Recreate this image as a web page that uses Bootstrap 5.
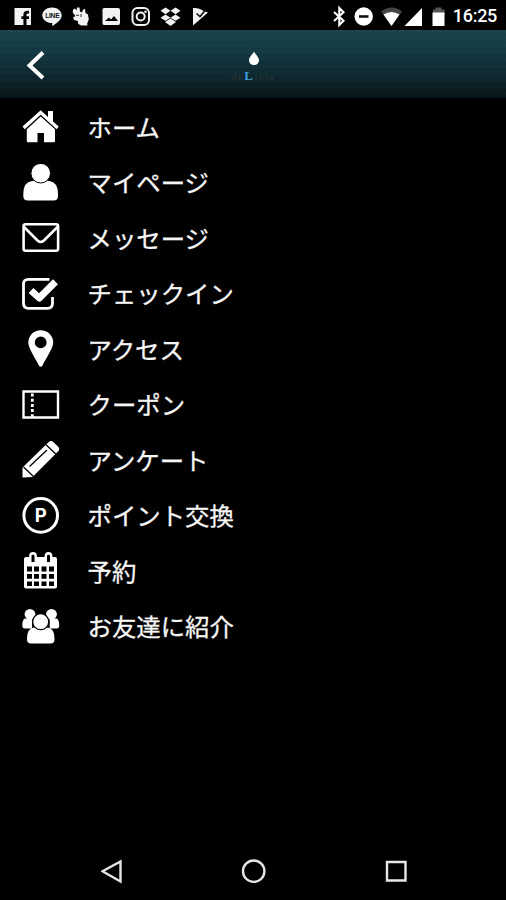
<!DOCTYPE html>
<html lang="ja">
<head>
<meta charset="utf-8">
<meta name="viewport" content="width=device-width, initial-scale=1">
<title>Menu</title>
<link href="https://cdn.jsdelivr.net/npm/bootstrap@5.3.0/dist/css/bootstrap.min.css" rel="stylesheet">
<style>
body{background:#000;color:#fff;font-family:"Noto Sans CJK JP",sans-serif;overflow:hidden}
svg{display:block;flex:none}
.screen{height:900px}
.statusbar{height:30px;padding:1px 9px 0 13px;font:500 18px/30px Roboto,sans-serif;letter-spacing:-.3px}
.app-head{height:69px;padding-left:26px;border-bottom:1px solid #020607;
background:repeating-linear-gradient(0deg,rgba(0,0,0,.09) 0 1px,transparent 1px 3px,rgba(70,130,140,.05) 3px 4px,transparent 4px 7px),linear-gradient(#1b444d,#163d46 25%,#102c34 60%,#061619)}
.brand-col{width:60px;margin-left:175.500px;padding-top:21px}
.brand-text{font:11px/11px "Liberation Serif",serif;color:#2a3436;letter-spacing:1.4px;white-space:nowrap}
.brand-text b{color:#3a9fdc;font-size:13px}
.menu-item{height:55.5px;padding-left:22px;color:#f6f6f6;text-decoration:none;font-size:24.4px;line-height:36px}
.menu-item svg{position:relative;top:.5px}
.menu-item span{margin-left:27.5px;white-space:nowrap;-webkit-text-stroke:.3px #f6f6f6}
.keys{height:58px;padding-left:101px}
</style>
</head>
<body>
<div class="screen d-flex flex-column">
<div class="statusbar d-flex align-items-center justify-content-between">
<svg width="200" height="28" viewBox="13 1 200 28" fill="#f2f2f2">
<path fill-rule="evenodd" d="M14.500 7h16.500v17h-4.500v-6h2.500v-2.800h-2.500v-1.500q0-1.500 2.500-1.300v-2.600q-5.600-.6-5.600 3.600v1.800h-2v2.800h2v6h-8.900z"/>
<path d="M52 6.500c5.400 0 9.700 3.400 9.700 7.800 0 4.700-5 8-9.300 10.700-.5-1-.1-2-.2-2.900-5.600 0-9.900-3.400-9.900-7.800s4.300-7.800 9.700-7.800z"/>
<text x="45.300" y="17" font-family="Liberation Sans" font-size="6.500" font-weight="700" fill="#111" textLength="14" lengthAdjust="spacingAndGlyphs">LINE</text>
<g><path d="M73 12q-1-4 2-4.500l1.500 2 .5-3h2.500l.5 4 2 1 1-3 2-.5.500 4 2.500 1.500.8 5-1.500 3.500v2.500h-6l-3-1.500-.5-3-3.500-1-1.300-2.500 2.500-1.500z"/><path d="M76 14l3 .5M81 13v3" stroke="#333"/></g>
<path fill-rule="evenodd" d="M104 7h14q2 0 2 2v13q0 2-2 2h-14q-1.500 0-1.500-2V9q0-2 1.500-2zM105 20h13l-4-5-3 3.500-2-2z"/>
<g fill="none" stroke="#f2f2f2" stroke-width="2"><rect x="132.500" y="7" width="16.500" height="17" rx="5"/><circle cx="140.700" cy="15.500" r="4"/></g><circle cx="145.500" cy="10.700" r="1.300"/>
<path d="M165.500 6.500l5 3.300-5 3.400-5-3.400zM175.500 6.500l5 3.300-5 3.400-5-3.400zM165.500 13.500l5 3.300-5 3-5-3zM175.500 13.500l5 3.300-5 3-5-3zM165 21l5.500-3.500 5.500 3.500-5.500 4z"/>
<path d="M193 7q5-.5 9 2l1.500 1 4.500 1.500L193 24.500z"/><path d="M196.500 12.500l3.500 3 5.500-6.500" fill="none" stroke="#111" stroke-width="1.600"/>
</svg>
<div class="d-flex align-items-center">
<svg width="120" height="28" viewBox="333 1 120 28" fill="#fff">
<path d="M334 11l9.500 8.700-4.200 4.300V7l4.200 4.200-9.500 8.700" fill="none" stroke="#fff" stroke-width="2.100"/>
<circle cx="363.700" cy="15.500" r="9.200"/><path d="M359 14.200h9.500v2.600H359z" fill="#111"/>
<path d="M381 10.500q11-8 21 0L391.500 25z" fill="#454545"/><path d="M383.500 13.500q8-5 16 0L391.500 25z"/>
<path d="M404.500 25L422 7v18z"/><path d="M433 8.500h2.500v-2h6v2h3V14H433z" fill="#555"/><path d="M432.500 11.500h12V25h-12z"/>
</svg><span>16:25</span></div>
</div>
<header class="app-head d-flex">
<svg width="22" height="68" viewBox="26 30 22 68"><path d="M43 52.500L29.500 65.500 43 78" fill="none" stroke="#fff" stroke-width="4"/></svg>
<div class="brand-col d-flex flex-column align-items-center">
<svg width="12" height="15" viewBox="0 0 12 15"><path d="M6 .5C7 3 11 6 11 9.300 11 12.300 9 14 6 14S1 12.300 1 9.300C1 6 5 3 6 .500z" fill="#fff"/></svg>
<div class="brand-text mt-1">de<b>L</b>icia</div>
</div>
</header>
<nav class="d-flex flex-column">
<a class="menu-item d-flex align-items-center" href="#"><svg width="38" height="38" fill="#fff"><path d="M18.700 2.300L26 9V3h5v10.500l5.700 5-2 2.700-16-14.500-16 14.500-2.200-2.700z"/><path d="M18.700 8.500L33 21.300V33q0 1.200-1.200 1.200H22V25h-6.500v9.200H6q-1.200 0-1.200-1.200V21.300z"/></svg><span>ホーム</span></a>
<a class="menu-item d-flex align-items-center" href="#"><svg width="38" height="38" fill="#fff"><path d="M10 17Q1.300 18 1.300 30v2q0 4.500 4.500 4.500h25.700q4.500 0 4.500-4.500v-2Q36 18 27.300 17z"/><circle cx="18.700" cy="9.200" r="9.800" stroke="#000" stroke-width="1"/></svg><span>マイページ</span></a>
<a class="menu-item d-flex align-items-center" href="#"><svg width="38" height="38" fill="none" stroke="#fff" stroke-width="2.600"><rect x="1.600" y="5.300" width="34.500" height="26.500" rx="2"/><path d="M2 8l13.500 13.500q3.200 3 6.400 0L35.500 8"/></svg><span>メッセージ</span></a>
<a class="menu-item d-flex align-items-center" href="#"><svg width="38" height="38" fill="none" stroke="#fff"><path d="M27.500 4.300H6.500q-5 0-5 5v19q0 5 5 5h19q5 0 5-5V22" stroke-width="2.800"/><path d="M9 15.500l8.300 7.500L33.500 6.800" stroke-width="7" stroke-linejoin="round"/></svg><span>チェックイン</span></a>
<a class="menu-item d-flex align-items-center" href="#"><svg width="38" height="38" fill="#fff"><path fill-rule="evenodd" d="M18.700.2c7 0 12.500 5.400 12.500 12.300 0 6-8.500 18-10.500 22.700q-2 3-4 0C14.700 30.500 6.300 18.500 6.300 12.500 6.300 5.600 11.700.2 18.700.2zm0 6.300a5.900 5.900 0 100 11.800 5.900 5.900 0 000-11.800z"/></svg><span>アクセス</span></a>
<a class="menu-item d-flex align-items-center" href="#"><svg width="38" height="38" fill="none" stroke="#fff"><path d="M1.500 5.500h34.500v26H1.500z" stroke-width="2.400"/><path d="M10.300 7.500V31" stroke-width="2.800" stroke-dasharray="3 2.200"/></svg><span>クーポン</span></a>
<a class="menu-item d-flex align-items-center" href="#"><svg width="38" height="38" fill="#fff"><path d="M.5 36.500V26.500L26.500 1.200q2.500-2.500 5 0l4.500 4.300q2.500 2.500 0 5L10.500 36z"/><path d="M1.500 26l10 9.500M24 3.800l9.800 9.200M7.500 25.500L25 9" stroke="#000" stroke-width="1.300"/></svg><span>アンケート</span></a>
<a class="menu-item d-flex align-items-center" href="#"><svg width="38" height="38" fill="#fff"><circle cx="18.700" cy="18.400" r="16.800" fill="none" stroke="#fff" stroke-width="3"/><text x="12.800" y="25.100" font-family="Inter,sans-serif" font-size="18.500" font-weight="700">P</text></svg><span>ポイント交換</span></a>
<a class="menu-item d-flex align-items-center" href="#"><svg width="38" height="38" fill="#fff"><rect x="2" y="5" width="33" height="31.500" rx="2"/><path d="M5 14.500h5v5H5zm7 0h5v5h-5zm7.500 0h5v5h-5zm7.500 0h5v5h-5zM5 22h5v4.700H5zm7 0h5v4.700h-5zm7.500 0h5v4.700h-5zm7.500 0h5v4.700h-5zM5 29.500h5v4.500H5zm7 0h5v4.500h-5zm7.500 0h5v4.500h-5zm7.500 0h5v4.500h-5z" fill="#000"/><path d="M7.800 9V4q0-3.300 3.200-3.300T14.200 4v5M23.300 9V4q0-3.300 3.200-3.300T29.700 4v5" stroke="#fff" stroke-width="1.400"/><path d="M9.500 4q0-1.300 1.500-1.300T12.500 4v6h-3zM25 4q0-1.300 1.500-1.300T28 4v6h-3z" fill="#000"/></svg><span>予約</span></a>
<a class="menu-item d-flex align-items-center" href="#"><svg width="38" height="38" fill="#fff"><path d="M3 10.500Q.3 11.500.3 17.500q0 3 2.500 3H10V10.500zM34.500 10.500q2.700 1 2.700 7 0 3-2.500 3h-7V10.500z"/><circle cx="8" cy="6.300" r="5.400"/><circle cx="29.500" cy="6.300" r="5.400"/><path d="M12 19.500Q5 20.500 5 30.500v1q0 4 4 4h19.500q4 0 4-4v-1q0-10-7-11z"/><circle cx="18.700" cy="13.700" r="8" stroke="#000" stroke-width="1.200"/></svg><span>お友達に紹介</span></a>
</nav>
<footer class="keys mt-auto">
<svg width="306" height="58" viewBox="101 842 306 58" fill="none" stroke="#e6e6e6" stroke-width="2.400"><path d="M120.500 861.500v20L102.500 871.300z"/><circle cx="253.700" cy="871.200" r="10.700"/><path d="M387 862h18.500v18.500H387z"/></svg>
</footer>
</div>
<script src="https://cdn.jsdelivr.net/npm/bootstrap@5.3.0/dist/js/bootstrap.bundle.min.js"></script>
</body>
</html>
